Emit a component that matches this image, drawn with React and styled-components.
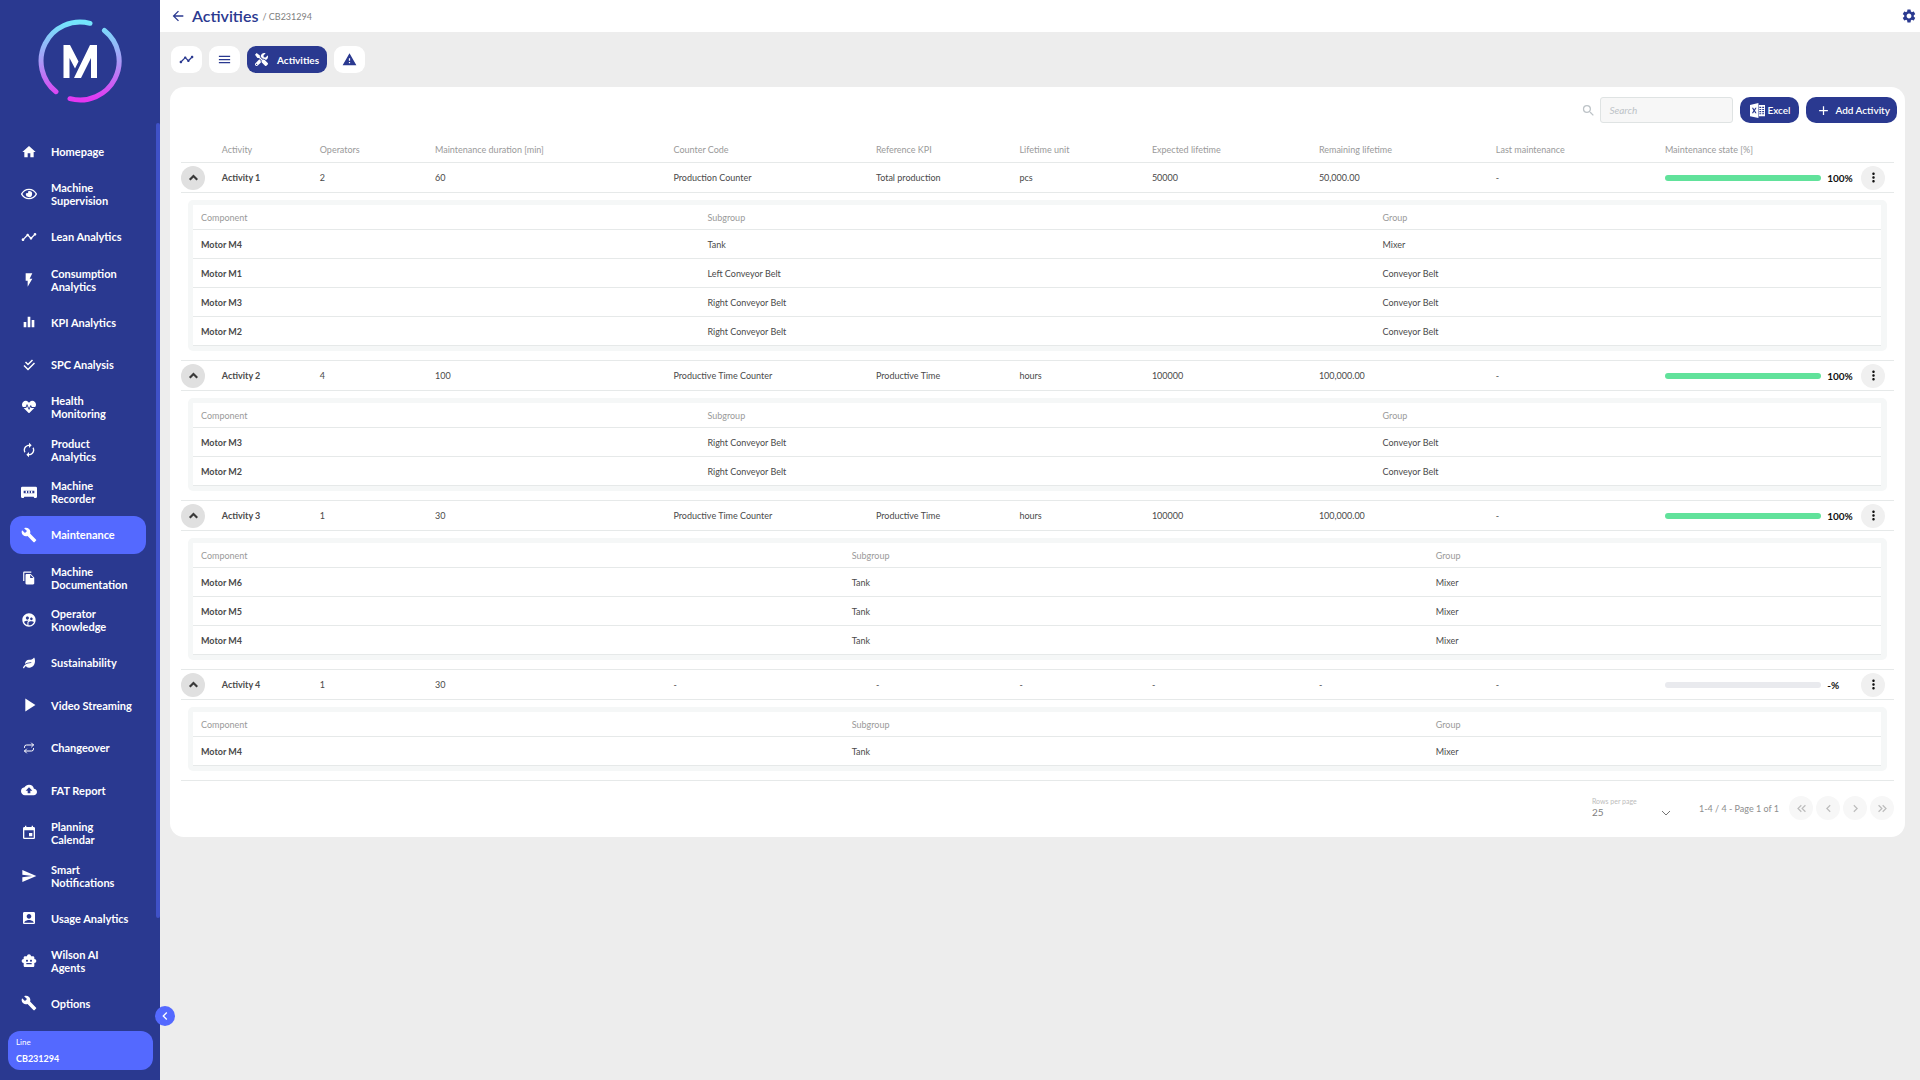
import React from "react"
import styled, { createGlobalStyle } from "styled-components"
import {
  MdHome,
  MdTimeline,
  MdFlashOn,
  MdEqualizer,
  MdAutorenew,
  MdBuild,
  MdFileCopy,
  MdSupervisedUserCircle,
  MdPlayArrow,
  MdBackup,
  MdEvent,
  MdSend,
  MdAccountBox,
  MdSmartToy,
  MdArrowBack,
  MdMenu,
  MdWarning,
  MdSettings,
  MdSearch,
  MdAdd,
  MdMoreVert,
  MdChevronLeft,
  MdChevronRight,
  MdKeyboardDoubleArrowLeft,
  MdKeyboardDoubleArrowRight,
} from "react-icons/md"
import { FaLeaf, FaHeartbeat, FaRegEye, FaTools } from "react-icons/fa"
import { LuRepeat } from "react-icons/lu"

const SpcIcon = () => (
  <svg viewBox="0 0 24 24" fill="none" stroke="currentColor" strokeWidth="3">
    <path d="M5 6l5 5 9-9" />
    <path d="M2 13l8 8L23 8" />
  </svg>
)

const RecorderIcon = () => (
  <svg viewBox="0 0 24 24" fill="currentColor">
    <path
      fillRule="evenodd"
      d="M2 4h20a2 2 0 0 1 2 2v13l-1 2h-3l-1-2H5l-1 2H1l-1-2V6a2 2 0 0 1 2-2zm2 6v4h16v-4H4z"
    />
    <path d="M7 10h2v4H7zM11 10h2v4h-2zM15 10h2v4h-2z" />
  </svg>
)

const ToggleIcon = () => (
  <svg viewBox="0 0 14 14" fill="none" stroke="currentColor" strokeWidth="2">
    <path d="M3.500 9L7 5.500 10.500 9" />
  </svg>
)

const ExcelIcon = () => (
  <svg viewBox="0 0 16 16" fill="currentColor">
    <path
      fillRule="evenodd"
      d="M0 2l9-2v16l-9-2zM2 5l1.700 3L2 11h1.400l1.100-2 1.100 2H7L5.300 8 7 5H5.600L4.500 7 3.400 5z"
    />
    <path
      fillRule="evenodd"
      d="M9.500 2H16v12H9.500zM10 4v1.200h2V4zm3 0v1.200h2V4zm-3 2.300v1.200h2V6.300zm3 0v1.200h2V6.300zm-3 2.300v1.200h2V8.600zm3 0v1.200h2V8.600zm-3 2.300v1.200h2v-1.200zm3 0v1.200h2v-1.200z"
    />
  </svg>
)

const Logo = () => (
  <svg width="86" height="86" viewBox="0 0 86 86" fill="none">
    <defs>
      <linearGradient id="ring" gradientUnits="userSpaceOnUse" x1="43" y1="4" x2="43" y2="82">
        <stop offset="0" stopColor="#73e6fc" />
        <stop offset="0.5" stopColor="#a99af6" />
        <stop offset="1" stopColor="#e336f2" />
      </linearGradient>
    </defs>
    <g stroke="url(#ring)" strokeWidth="5" strokeLinecap="round">
      <path d="M53 5.300A39 39 0 0 0 19 73.700" />
      <path d="M67.400 12.500A39 39 0 0 1 33 80.700" />
    </g>
    <g fill="#fff">
      <path d="M26.500 27h6.500l8.500 16.500-3.500 7-5.500-10.500V60h-6z" />
      <path d="M53 27h7v33h-6V40L44 60h-7z" />
    </g>
  </svg>
)

const navItems = [
  { label: "Homepage", icon: MdHome },
  { label: "Machine Supervision", icon: FaRegEye },
  { label: "Lean Analytics", icon: MdTimeline },
  { label: "Consumption Analytics", icon: MdFlashOn },
  { label: "KPI Analytics", icon: MdEqualizer },
  { label: "SPC Analysis", icon: SpcIcon, size: 12 },
  { label: "Health Monitoring", icon: FaHeartbeat, size: 14 },
  { label: "Product Analytics", icon: MdAutorenew },
  { label: "Machine Recorder", icon: RecorderIcon },
  { label: "Maintenance", icon: MdBuild, active: true },
  { label: "Machine Documentation", icon: MdFileCopy, size: 14 },
  { label: "Operator Knowledge", icon: MdSupervisedUserCircle },
  { label: "Sustainability", icon: FaLeaf, size: 12 },
  { label: "Video Streaming", icon: MdPlayArrow, size: 22 },
  { label: "Changeover", icon: LuRepeat, size: 12 },
  { label: "FAT Report", icon: MdBackup },
  { label: "Planning Calendar", icon: MdEvent },
  { label: "Smart Notifications", icon: MdSend },
  { label: "Usage Analytics", icon: MdAccountBox },
  { label: "Wilson AI Agents", icon: MdSmartToy },
  { label: "Options", icon: MdBuild },
]

const columns = [
  { label: "", share: 2.38 },
  { label: "Activity", share: 5.72 },
  { label: "Operators", share: 6.73 },
  { label: "Maintenance duration [min]", share: 13.92 },
  { label: "Counter Code", share: 11.82 },
  { label: "Reference KPI", share: 8.38 },
  { label: "Lifetime unit", share: 7.73 },
  { label: "Expected lifetime", share: 9.75 },
  { label: "Remaining lifetime", share: 10.33 },
  { label: "Last maintenance", share: 9.87 },
  { label: "Maintenance state [%]", share: 11.46 },
  { label: "", share: 1.91 },
]

const activities = [
  {
    name: "Activity 1",
    values: ["2", "60", "Production Counter", "Total production", "pcs", "50000", "50,000.00", "-"],
    state: 100,
    shares: [30, 40, 30],
    components: [
      ["Motor M4", "Tank", "Mixer"],
      ["Motor M1", "Left Conveyor Belt", "Conveyor Belt"],
      ["Motor M3", "Right Conveyor Belt", "Conveyor Belt"],
      ["Motor M2", "Right Conveyor Belt", "Conveyor Belt"],
    ],
  },
  {
    name: "Activity 2",
    values: ["4", "100", "Productive Time Counter", "Productive Time", "hours", "100000", "100,000.00", "-"],
    state: 100,
    shares: [30, 40, 30],
    components: [
      ["Motor M3", "Right Conveyor Belt", "Conveyor Belt"],
      ["Motor M2", "Right Conveyor Belt", "Conveyor Belt"],
    ],
  },
  {
    name: "Activity 3",
    values: ["1", "30", "Productive Time Counter", "Productive Time", "hours", "100000", "100,000.00", "-"],
    state: 100,
    shares: [38.55, 34.6, 26.85],
    components: [
      ["Motor M6", "Tank", "Mixer"],
      ["Motor M5", "Tank", "Mixer"],
      ["Motor M4", "Tank", "Mixer"],
    ],
  },
  {
    name: "Activity 4",
    values: ["1", "30", "-", "-", "-", "-", "-", "-"],
    state: null,
    shares: [38.55, 34.6, 26.85],
    components: [["Motor M4", "Tank", "Mixer"]],
  },
]

const Components = ({ rows, shares }) => (
  <DetailBox>
    <Table>
      <colgroup>
        {shares.map((share, i) => (
          <Col key={i} $share={share} />
        ))}
      </colgroup>
      <thead>
        <tr>
          <SubHead>Component</SubHead>
          <SubHead>Subgroup</SubHead>
          <SubHead>Group</SubHead>
        </tr>
      </thead>
      <tbody>
        {rows.map((row) => (
          <tr key={row[0]}>
            {row.map((cell, i) => (
              <SubCell key={i} $bold={i === 0}>
                {cell}
              </SubCell>
            ))}
          </tr>
        ))}
      </tbody>
    </Table>
  </DetailBox>
)

const App = () => {
  return (
    <Layout>
      <GlobalStyle />
      <Sidebar>
        <LogoArea>
          <Logo />
        </LogoArea>
        <Nav>
          {navItems.map(({ label, icon: Icon, active, size }) => (
            <NavLink key={label} href="#" $active={active}>
              <NavIcon $size={size || 16}>
                <Icon />
              </NavIcon>
              <span>{label}</span>
            </NavLink>
          ))}
        </Nav>
        <LineBox>
          <small>Line</small>
          <strong>CB231294</strong>
        </LineBox>
        <CollapseButton aria-label="Collapse menu">
          <MdChevronLeft />
        </CollapseButton>
      </Sidebar>

      <Main>
        <TopBar>
          <IconButton aria-label="Back">
            <MdArrowBack />
          </IconButton>
          <h1>Activities</h1>
          <span>/ CB231294</span>
          <IconButton aria-label="Settings" $end>
            <MdSettings />
          </IconButton>
        </TopBar>

        <Tabs>
          <Tab aria-label="Trend">
            <MdTimeline />
          </Tab>
          <Tab aria-label="List">
            <MdMenu />
          </Tab>
          <Tab $active>
            <FaTools />
            Activities
          </Tab>
          <Tab aria-label="Alarms">
            <MdWarning />
          </Tab>
        </Tabs>

        <Card>
          <Toolbar>
            <SearchLabel>
              <MdSearch />
              <input type="text" placeholder="Search" aria-label="Search" />
            </SearchLabel>
            <ActionButton>
              <ExcelIcon />
              Excel
            </ActionButton>
            <ActionButton $wide>
              <MdAdd />
              Add Activity
            </ActionButton>
          </Toolbar>

          <Table>
            <colgroup>
              {columns.map((col, i) => (
                <Col key={i} $share={col.share} />
              ))}
            </colgroup>
            <thead>
              <tr>
                {columns.map((col, i) => (
                  <Head key={i}>{col.label}</Head>
                ))}
              </tr>
            </thead>
            <tbody>
              {activities.map((a) => (
                <React.Fragment key={a.name}>
                  <tr>
                    <Cell>
                      <RoundButton $toggle aria-label={"Collapse " + a.name}>
                        <ToggleIcon />
                      </RoundButton>
                    </Cell>
                    <Cell $bold>{a.name}</Cell>
                    {a.values.map((v, i) => (
                      <Cell key={i}>{v}</Cell>
                    ))}
                    <Cell>
                      <State>
                        <Bar $full={a.state !== null} />
                        <b>{a.state === null ? "-" : a.state}%</b>
                      </State>
                    </Cell>
                    <Cell>
                      <RoundButton aria-label={"Menu of " + a.name}>
                        <MdMoreVert />
                      </RoundButton>
                    </Cell>
                  </tr>
                  <tr>
                    <DetailCell colSpan={columns.length}>
                      <Components rows={a.components} shares={a.shares} />
                    </DetailCell>
                  </tr>
                </React.Fragment>
              ))}
            </tbody>
          </Table>

          <Footer>
            <RowsLabel>
              Rows per page
              <select defaultValue="25">
                <option>25</option>
                <option>50</option>
              </select>
              <svg viewBox="0 0 10 6" fill="none" stroke="currentColor">
                <path d="M1 1l4 4 4-4" />
              </svg>
            </RowsLabel>
            <PageText>1-4 / 4 - Page 1 of 1</PageText>
            <Pager>
              <RoundButton $muted aria-label="First page">
                <MdKeyboardDoubleArrowLeft />
              </RoundButton>
              <RoundButton $muted aria-label="Previous page">
                <MdChevronLeft />
              </RoundButton>
              <RoundButton $muted aria-label="Next page">
                <MdChevronRight />
              </RoundButton>
              <RoundButton $muted aria-label="Last page">
                <MdKeyboardDoubleArrowRight />
              </RoundButton>
            </Pager>
          </Footer>
        </Card>
      </Main>
    </Layout>
  )
}
export default App

const GlobalStyle = createGlobalStyle`
  * {
    box-sizing: border-box;
  }
  body {
    margin: 0;
    background-color: #ededed;
    font-family: Lato, "Open Sans", sans-serif;
    font-size: 9px;
    color: #4a4a4a;
  }
  button, input, select {
    font-family: inherit;
    margin: 0;
  }
  button {
    cursor: pointer;
    border: none;
    padding: 0;
  }
`

const Layout = styled.div`
  display: flex;
  min-height: 100vh;
`

const Sidebar = styled.aside`
  position: sticky;
  top: 0;
  display: flex;
  flex-direction: column;
  flex: none;
  width: 160px;
  height: 100vh;
  padding-bottom: 10px;
  background-color: #2a3990;
  color: #fff;
`

const LogoArea = styled.div`
  display: flex;
  flex: none;
  justify-content: center;
  height: 123px;
  padding-top: 18px;
`

const Nav = styled.nav`
  position: relative;
  display: flex;
  flex: 1;
  flex-direction: column;
  gap: 5px;
  min-height: 0;
  padding: 10px 14px 9px 10px;
  &::after {
    content: "";
    position: absolute;
    top: 0;
    right: 0;
    width: 4px;
    height: 87.5%;
    border-radius: 2px;
    background-color: #3f51c7;
  }
`

const NavLink = styled.a`
  display: flex;
  flex: 1;
  align-items: center;
  gap: 13px;
  padding: 0 12px 0 10px;
  border-radius: 12px;
  background-color: ${(p) => (p.$active ? "#5469ff" : "transparent")};
  color: #fff;
  font-size: 11px;
  font-weight: 700;
  line-height: 13px;
  text-decoration: none;
`

const NavIcon = styled.span`
  display: flex;
  flex: none;
  justify-content: center;
  width: 18px;
  svg {
    flex: none;
    width: ${(p) => p.$size}px;
    height: ${(p) => p.$size}px;
  }
`

const LineBox = styled.div`
  display: flex;
  flex: none;
  flex-direction: column;
  justify-content: space-between;
  height: 39px;
  margin: 0 7px 0 8px;
  padding: 5px 8px;
  border-radius: 12px;
  background-color: #5469ff;
  line-height: 12px;
  small {
    font-size: 8px;
  }
  strong {
    font-size: 9px;
  }
`

const CollapseButton = styled.button`
  position: absolute;
  right: -15px;
  bottom: 54px;
  display: flex;
  align-items: center;
  justify-content: center;
  width: 20px;
  height: 20px;
  border-radius: 50%;
  background-color: #5469ff;
  color: #fff;
  font-size: 16px;
`

const Main = styled.main`
  flex: 1;
  min-width: 0;
`

const TopBar = styled.header`
  display: flex;
  align-items: center;
  height: 32px;
  padding: 0 3px 0 10px;
  background-color: #fff;
  h1 {
    margin: 0 4px 0 6px;
    color: #2a3990;
    font-size: 16px;
    font-weight: 600;
    line-height: 20px;
  }
  span {
    color: #808080;
  }
`

const IconButton = styled.button`
  display: flex;
  margin-left: ${(p) => (p.$end ? "auto" : "0")};
  background: none;
  color: #2a3990;
  font-size: 16px;
`

const Tabs = styled.nav`
  display: flex;
  gap: 7px;
  padding: 14px 11px;
`

const Tab = styled.button`
  display: flex;
  align-items: center;
  justify-content: center;
  gap: 9px;
  min-width: 31px;
  height: 27px;
  padding: 0 8px;
  border-radius: 9px;
  background-color: ${(p) => (p.$active ? "#2a3990" : "#fff")};
  color: ${(p) => (p.$active ? "#fff" : "#2a3990")};
  font-size: 10px;
  font-weight: 700;
  svg {
    width: ${(p) => (p.$active ? 13 : 15)}px;
    height: ${(p) => (p.$active ? 13 : 15)}px;
  }
`

const Card = styled.section`
  margin: 0 15px 10px 10px;
  padding: 10px 11px 17px;
  border-radius: 14px;
  background-color: #fff;
`

const Toolbar = styled.div`
  display: flex;
  justify-content: flex-end;
  gap: 7px;
  margin: 0 -3px 14px 0;
`

const SearchLabel = styled.label`
  display: flex;
  align-items: center;
  gap: 4px;
  color: #bdc3c7;
  font-size: 15px;
  input {
    width: 133px;
    height: 26px;
    padding: 0 8px;
    border: 1px solid #dfe3e3;
    border-radius: 3px;
    background-color: #f7f7f7;
    font-size: 10px;
  }
  input::placeholder {
    color: #bdc3c7;
    font-style: italic;
  }
`

const ActionButton = styled.button`
  display: flex;
  align-items: center;
  gap: ${(p) => (p.$wide ? 4 : 2)}px;
  min-width: 59px;
  height: 26px;
  padding: 0 7px 0 10px;
  border-radius: 10px;
  background-color: #2a3990;
  color: #fff;
  font-size: 10px;
  font-weight: 600;
  svg {
    width: 15px;
    height: 15px;
  }
`

const Table = styled.table`
  width: 100%;
  table-layout: fixed;
  border-collapse: separate;
  border-spacing: 0;
  background-color: #fff;
`

const Col = styled.col`
  width: ${(p) => p.$share}%;
`

const Head = styled.th`
  height: 26px;
  padding: 0;
  border-bottom: 1px solid #e6e9e9;
  color: #9a9a9a;
  font-weight: 400;
  text-align: left;
  white-space: nowrap;
`

const SubHead = styled(Head)`
  height: 25px;
  padding: 0 8px;
`

const Cell = styled.td`
  height: 30px;
  padding: 0;
  border-bottom: 1px solid #e6e9e9;
  font-weight: ${(p) => (p.$bold ? 700 : 400)};
  white-space: nowrap;
`

const SubCell = styled(Cell)`
  height: 29px;
  padding: 0 8px;
`

const DetailCell = styled.td`
  padding: 7px 7px 9px;
  border-bottom: 1px solid #e6e9e9;
`

const DetailBox = styled.div`
  padding: 5px 6px 5px 5px;
  border-radius: 5px;
  background-color: #f5f7f7;
`

const RoundButton = styled.button`
  display: flex;
  align-items: center;
  justify-content: center;
  width: 24px;
  height: 24px;
  border-radius: 50%;
  background-color: ${(p) => (p.$toggle ? "#e0e0e0" : p.$muted ? "#f7f7f7" : "#f0f0f0")};
  color: ${(p) => (p.$toggle ? "#3a3a3a" : p.$muted ? "#bdbdbd" : "#111")};
  svg {
    width: 15px;
    height: 15px;
  }
`

const State = styled.div`
  display: flex;
  align-items: center;
  gap: 6px;
  b {
    width: 34px;
    color: #111;
    font-size: 10px;
  }
`

const Bar = styled.div`
  flex: 1;
  height: 6px;
  border-radius: 3px;
  background-color: ${(p) => (p.$full ? "#61e29b" : "#e9eaee")};
`

const Footer = styled.div`
  display: flex;
  align-items: center;
  justify-content: flex-end;
  padding-top: 15px;
  color: #8e8e8e;
`

const RowsLabel = styled.label`
  position: relative;
  display: flex;
  flex-direction: column;
  width: 80px;
  margin-right: 27px;
  color: #bdbdbd;
  font-size: 7px;
  line-height: 8px;
  select {
    appearance: none;
    height: 14px;
    padding: 0;
    border: none;
    background: none;
    color: #808080;
    font-size: 10px;
  }
  svg {
    position: absolute;
    right: 1px;
    bottom: 3px;
    width: 10px;
    height: 6px;
    color: #757575;
  }
`

const PageText = styled.span`
  margin-right: 10px;
`

const Pager = styled.div`
  display: flex;
  gap: 3px;
`
